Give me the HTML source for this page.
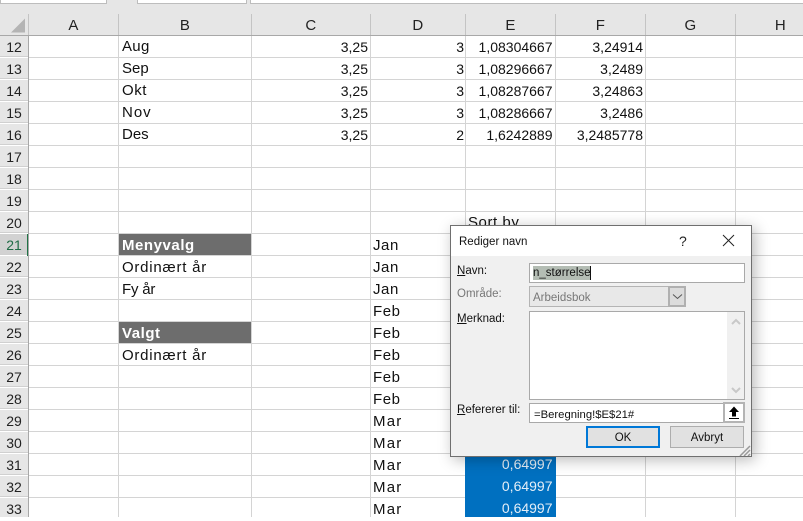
<!DOCTYPE html>
<html><head><meta charset="utf-8"><style>
html,body{margin:0;padding:0}
body{width:803px;height:517px;overflow:hidden;background:#fff;position:relative;font-family:"Liberation Sans",sans-serif}
div{position:absolute;box-sizing:border-box}
.v{top:36px;width:1px;height:481px;background:#d4d4d4}
.h{left:28px;width:775px;height:1px;background:#d4d4d4}
.ch{top:14px;height:21px;line-height:23px;text-align:center;font-size:15px;color:#222;letter-spacing:.3px}
.cs{top:14px;width:1px;height:21px;background:#c4c4c4}
.rh{left:0;width:28px;height:21px;line-height:22px;text-align:center;font-size:14px;color:#222;background:#e6e6e6;border-bottom:1px solid #d0d0d0}
.t{height:22px;line-height:22px;font-size:15px;color:#111;letter-spacing:.55px;white-space:nowrap}
.n{height:22px;line-height:22px;font-size:14px;color:#111;text-align:right;white-space:nowrap}
.C{left:251px;width:117px}.D{left:370px;width:94px}.E{left:465px;width:87.500px}.F{left:555px;width:88px}
.b{left:122px;font-weight:bold;color:#fff}
.m{left:373px}
.dl{font-size:11.500px;color:#111;white-space:nowrap;left:6px;line-height:14px}
.box{background:#fff;border:1px solid #a9a9a9}
.btn{background:#e1e1e1;border:1px solid #adadad;text-align:center;font-size:11.500px;color:#111;line-height:22px}
u{text-decoration:underline}
</style></head><body>
<div style="left:0;top:0;width:803px;height:36px;background:#e6e6e6"></div>
<div style="left:0;top:0;width:107px;height:4px;background:#fff;border:1px solid #bdbdbd;border-top:0"></div>
<div style="left:137px;top:0;width:110px;height:4px;background:#fff;border:1px solid #bdbdbd;border-top:0"></div>
<div style="left:250px;top:0;width:553px;height:4px;background:#fff;border-bottom:1px solid #bdbdbd;border-left:1px solid #bdbdbd"></div>
<svg style="position:absolute;left:0;top:14px" width="28" height="21"><path d="M11 18.500 L25 18.500 L25 4.500 Z" fill="#b4b4b4"/></svg>
<div style="left:0;top:35px;width:803px;height:1px;background:#a8a8a8"></div>
<div class="cs" style="left:28px"></div><div class="cs" style="left:118px"></div><div class="cs" style="left:251px"></div><div class="cs" style="left:370px"></div><div class="cs" style="left:465px"></div><div class="cs" style="left:555px"></div><div class="cs" style="left:645px"></div><div class="cs" style="left:735px"></div>
<div class="ch" style="left:29px;width:89px">A</div>
<div class="ch" style="left:119px;width:132px">B</div>
<div class="ch" style="left:252px;width:118px">C</div>
<div class="ch" style="left:371px;width:94px">D</div>
<div class="ch" style="left:466px;width:89px">E</div>
<div class="ch" style="left:556px;width:89px">F</div>
<div class="ch" style="left:646px;width:89px">G</div>
<div class="ch" style="left:736px;width:89px">H</div>

<div class="v" style="left:118px"></div><div class="v" style="left:251px"></div><div class="v" style="left:370px"></div><div class="v" style="left:465px"></div><div class="v" style="left:555px"></div><div class="v" style="left:645px"></div><div class="v" style="left:735px"></div>
<div class="h" style="top:57px"></div><div class="h" style="top:79px"></div><div class="h" style="top:101px"></div><div class="h" style="top:123px"></div><div class="h" style="top:145px"></div><div class="h" style="top:167px"></div><div class="h" style="top:189px"></div><div class="h" style="top:211px"></div><div class="h" style="top:233px"></div><div class="h" style="top:255px"></div><div class="h" style="top:277px"></div><div class="h" style="top:299px"></div><div class="h" style="top:321px"></div><div class="h" style="top:343px"></div><div class="h" style="top:365px"></div><div class="h" style="top:387px"></div><div class="h" style="top:409px"></div><div class="h" style="top:431px"></div><div class="h" style="top:453px"></div><div class="h" style="top:475px"></div><div class="h" style="top:497px"></div>

<div class="rh" style="top:36px">12</div><div class="rh" style="top:58px">13</div><div class="rh" style="top:80px">14</div><div class="rh" style="top:102px">15</div><div class="rh" style="top:124px">16</div><div class="rh" style="top:146px">17</div><div class="rh" style="top:168px">18</div><div class="rh" style="top:190px">19</div><div class="rh" style="top:212px">20</div>
<div class="rh" style="top:234px;background:#d2d2d2;color:#1f6b45">21</div>
<div style="left:27px;top:234px;width:2px;height:22px;background:#217346"></div>
<div class="rh" style="top:256px">22</div><div class="rh" style="top:278px">23</div><div class="rh" style="top:300px">24</div><div class="rh" style="top:322px">25</div><div class="rh" style="top:344px">26</div><div class="rh" style="top:366px">27</div><div class="rh" style="top:388px">28</div><div class="rh" style="top:410px">29</div><div class="rh" style="top:432px">30</div><div class="rh" style="top:454px">31</div><div class="rh" style="top:476px">32</div><div class="rh" style="top:498px;height:19px;border:0">33</div>
<div style="left:28px;top:36px;width:1px;height:481px;background:#a8a8a8"></div>

<div class="t" style="left:122px;top:36px;letter-spacing:.3px">Aug</div><div class="n C" style="top:36px">3,25</div><div class="n D" style="top:36px">3</div><div class="n E" style="top:36px">1,08304667</div><div class="n F" style="top:36px">3,24914</div>
<div class="t" style="left:122px;top:58px;letter-spacing:0">Sep</div><div class="n C" style="top:58px">3,25</div><div class="n D" style="top:58px">3</div><div class="n E" style="top:58px">1,08296667</div><div class="n F" style="top:58px">3,2489</div>
<div class="t" style="left:122px;top:80px">Okt</div><div class="n C" style="top:80px">3,25</div><div class="n D" style="top:80px">3</div><div class="n E" style="top:80px">1,08287667</div><div class="n F" style="top:80px">3,24863</div>
<div class="t" style="left:122px;top:102px;letter-spacing:1px">Nov</div><div class="n C" style="top:102px">3,25</div><div class="n D" style="top:102px">3</div><div class="n E" style="top:102px">1,08286667</div><div class="n F" style="top:102px">3,2486</div>
<div class="t" style="left:122px;top:124px;letter-spacing:0">Des</div><div class="n C" style="top:124px">3,25</div><div class="n D" style="top:124px">2</div><div class="n E" style="top:124px">1,6242889</div><div class="n F" style="top:124px">3,2485778</div>

<div class="t" style="left:468px;top:212px">Sort by</div>
<div style="left:119px;top:234px;width:132px;height:21px;background:#6d6d6d"></div>
<div class="t b" style="top:235px">Menyvalg</div>
<div class="t" style="left:122px;top:257px;letter-spacing:.75px">Ordinært år</div>
<div class="t" style="left:122px;top:279px;letter-spacing:-.2px">Fy år</div>
<div style="left:119px;top:322px;width:132px;height:21px;background:#6d6d6d"></div>
<div class="t b" style="top:323px">Valgt</div>
<div class="t" style="left:122px;top:345px;letter-spacing:.75px">Ordinært år</div>

<div class="t m" style="top:235px">Jan</div><div class="t m" style="top:257px">Jan</div><div class="t m" style="top:279px">Jan</div><div class="t m" style="top:301px">Feb</div><div class="t m" style="top:323px">Feb</div><div class="t m" style="top:345px">Feb</div><div class="t m" style="top:367px">Feb</div><div class="t m" style="top:389px">Feb</div><div class="t m" style="top:411px;letter-spacing:1.200px">Mar</div><div class="t m" style="top:433px;letter-spacing:1.200px">Mar</div><div class="t m" style="top:455px;letter-spacing:1.200px">Mar</div><div class="t m" style="top:477px;letter-spacing:1.200px">Mar</div><div class="t m" style="top:499px;letter-spacing:1.200px">Mar</div>

<div style="left:465px;top:234px;width:91px;height:283px;background:#0070c0"></div>
<div class="n E" style="top:453px;color:#e4eef7">0,64997</div><div class="n E" style="top:475px;color:#e4eef7">0,64997</div><div class="n E" style="top:497px;color:#e4eef7">0,64997</div>

<!-- dialog -->
<div style="left:450px;top:225px;width:302px;height:232px;background:#f0f0f0;border:1px solid #6f6f6f;box-shadow:3px 3px 14px rgba(0,0,0,.28)">
 <div style="left:0;top:0;width:300px;height:30px;background:#fff"></div>
 <div style="left:8px;top:9px;font-size:11.500px;line-height:15px;color:#111;white-space:nowrap">Rediger navn</div>
 <div style="left:228px;top:7px;font-size:14px;line-height:16px;color:#222">?</div>
 <svg style="position:absolute;left:271px;top:8px" width="13" height="13"><path d="M1 1L12 12M12 1L1 12" stroke="#222" stroke-width="1" fill="none"/></svg>

 <div class="dl" style="top:38px"><u>N</u>avn:</div>
 <div class="box" style="left:78px;top:37px;width:216px;height:20px"></div>
 <div style="left:82px;top:40px;width:57px;height:14px;background:#b4bdb4"></div>
 <div style="left:82px;top:39px;font-size:11.500px;line-height:16px;color:#111">n_størrelse</div>
 <div style="left:139px;top:40px;width:1px;height:14px;background:#111"></div>

 <div class="dl" style="top:61px;color:#777">Område:</div>
 <div style="left:78px;top:60px;width:157px;height:21px;background:#e8e8e8;border:1px solid #b4b4b4"></div>
 <div style="left:82px;top:64px;font-size:11.500px;line-height:16px;color:#777">Arbeidsbok</div>
 <div style="left:217px;top:60px;width:18px;height:21px;background:#dcdcdc;border:2px solid #b0b0b0"></div>
 <svg style="position:absolute;left:221px;top:67px" width="11" height="7"><path d="M1 1.500L5.500 5.500L10 1.500" stroke="#555" fill="none"/></svg>

 <div class="dl" style="top:86px"><u>M</u>erknad:</div>
 <div class="box" style="left:78px;top:85px;width:216px;height:89px"></div>
 <div style="left:276px;top:86px;width:17px;height:87px;background:#f0f0f0"></div>
 <svg style="position:absolute;left:279px;top:90px" width="12" height="80"><path d="M2 8L6 4L10 8" stroke="#c8c8c8" stroke-width="2" fill="none"/><path d="M2 72L6 76L10 72" stroke="#c8c8c8" stroke-width="2" fill="none"/></svg>

 <div class="dl" style="top:177px"><u>R</u>efererer til:</div>
 <div class="box" style="left:78px;top:177px;width:216px;height:20px"></div>
 <div style="left:83px;top:181px;font-size:11.300px;line-height:16px;color:#111">=Beregning!$E$21#</div>
 <div style="left:272px;top:176px;width:22px;height:21px;background:#fff;border:2px solid #b4b4b4"></div>
 <svg style="position:absolute;left:275px;top:179px" width="16" height="16"><path d="M8 1.500L13 7H10V11.500H6V7H3Z" fill="#000"/><rect x="3" y="13" width="10" height="1" fill="#000"/></svg>

 <div class="btn" style="left:135px;top:200px;width:74px;height:22px;border:2px solid #0078d7;line-height:20px">OK</div>
 <div class="btn" style="left:219px;top:200px;width:74px;height:22px">Avbryt</div>
 <svg style="position:absolute;left:287px;top:218px" width="13" height="12"><path d="M12 2L2 12M12 6L6 12M12 10L10 12" stroke="#9a9a9a" stroke-width="1.500" fill="none"/></svg>
</div>
</body></html>
